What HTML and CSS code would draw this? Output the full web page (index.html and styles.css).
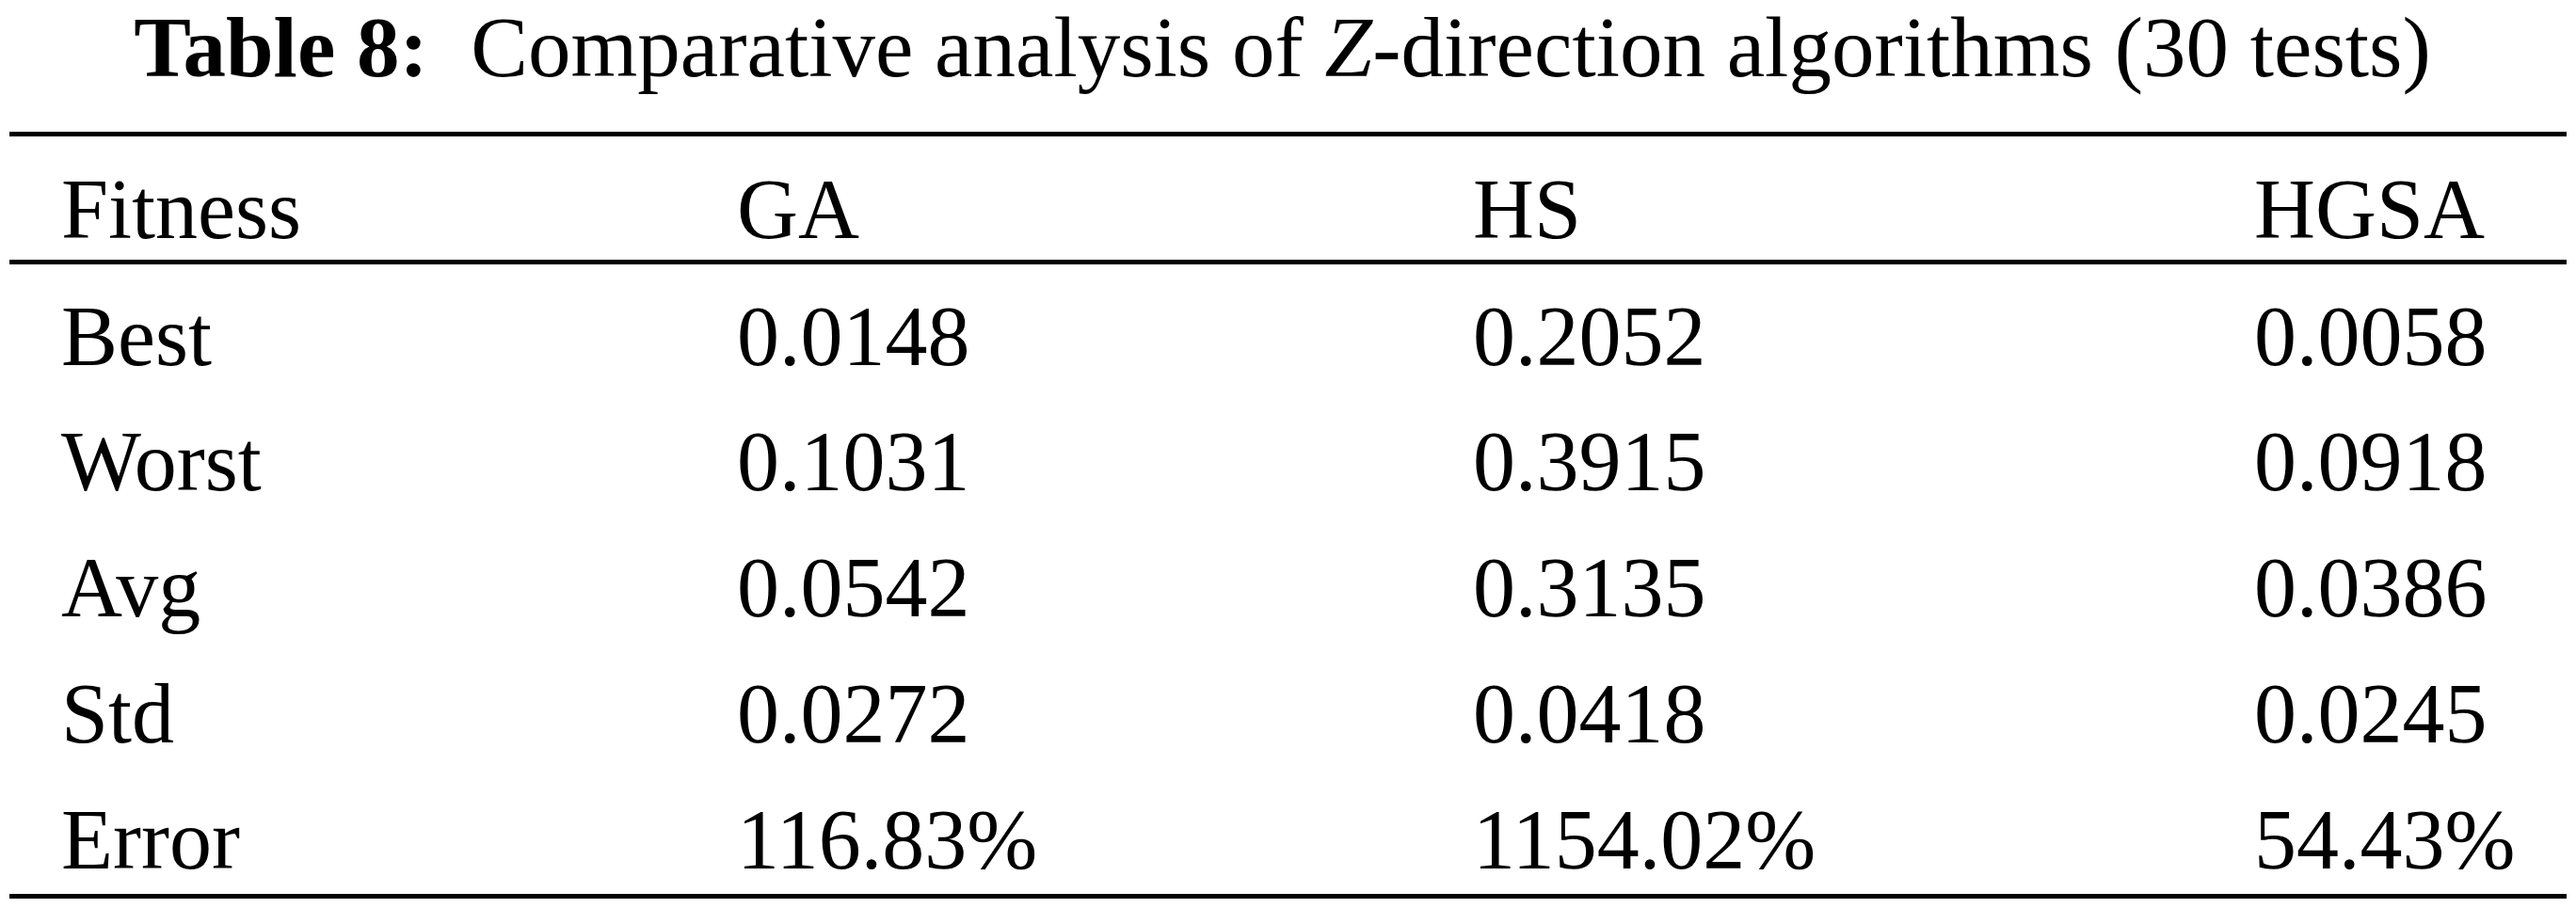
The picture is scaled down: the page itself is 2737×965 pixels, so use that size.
FILE: index.html
```html
<!DOCTYPE html>
<html lang="en">
<head>
<meta charset="utf-8">
<title>Table 8</title>
<link rel="stylesheet" href="styles.css">
</head>
<body>
<div class="wrap">
  <div class="caption"><b>Table 8:</b>&nbsp; Comparative analysis of <i>Z</i>-direction algorithms (30 tests)</div>
  <div class="tbl">
    <div class="row head">
      <div class="cell">Fitness</div><div class="cell">GA</div><div class="cell">HS</div><div class="cell">HGSA</div>
    </div>
    <div class="tbody">
      <div class="row"><div class="cell">Best</div><div class="cell">0.0148</div><div class="cell">0.2052</div><div class="cell">0.0058</div></div>
      <div class="row"><div class="cell">Worst</div><div class="cell">0.1031</div><div class="cell">0.3915</div><div class="cell">0.0918</div></div>
      <div class="row"><div class="cell">Avg</div><div class="cell">0.0542</div><div class="cell">0.3135</div><div class="cell">0.0386</div></div>
      <div class="row"><div class="cell">Std</div><div class="cell">0.0272</div><div class="cell">0.0418</div><div class="cell">0.0245</div></div>
      <div class="row"><div class="cell">Error</div><div class="cell">116.83%</div><div class="cell">1154.02%</div><div class="cell">54.43%</div></div>
    </div>
  </div>
</div>
</body>
</html>
```
FILE: styles.css
```css
html, body {
  margin: 0;
  padding: 0;
  background: #fff;
}
body {
  font-family: "Liberation Serif", "Times New Roman", serif;
  font-size: 90px;
  color: #000;
}
.wrap {
  width: 2717px;
  margin-left: 10px;
}
.caption {
  font-size: 91px;
  height: 101px;
  line-height: 101px;
  margin-bottom: 39px;
  padding-right: 12px;
  text-align: center;
  white-space: nowrap;
}
.caption b {
  font-weight: bold;
}
.tbl {
  border-top: 5px solid #000;
  border-bottom: 5px solid #000;
}
.row {
  display: grid;
  grid-template-columns: 718px 782px 830px 387px;
}
.cell {
  padding-left: 55px;
  line-height: 100px;
  white-space: nowrap;
}
.head {
  border-bottom: 5px solid #000;
}
.head .cell {
  padding-top: 28px;
  padding-bottom: 3px;
}
.tbody .cell {
  padding-top: 26.6px;
  padding-bottom: 7.2px;
}
```
